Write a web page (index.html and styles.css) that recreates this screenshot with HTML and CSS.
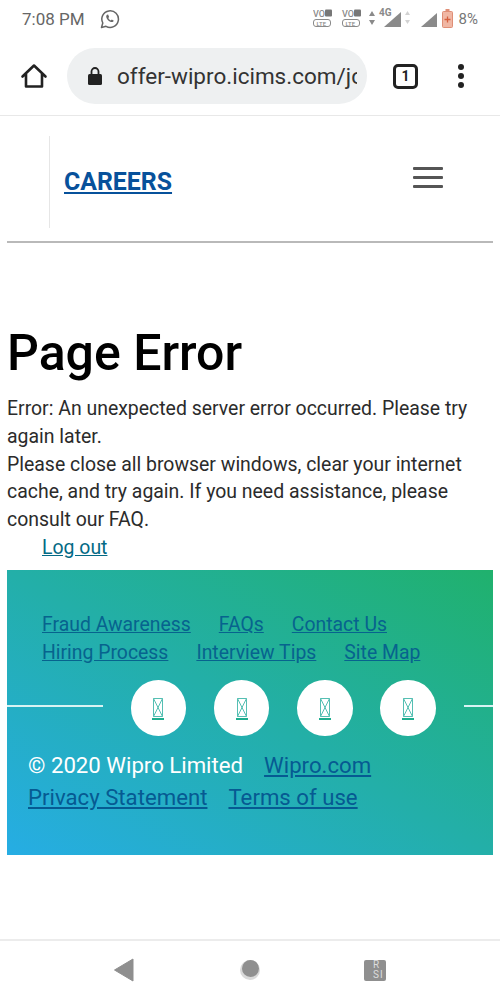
FILE: index.html
```html
<!DOCTYPE html>
<html lang="en">
<head>
<meta charset="utf-8">
<title>Page Error</title>
<link rel="stylesheet" href="styles.css">
</head>
<body>
<div class="status">
  <div class="status-left">
    <span class="clock">7:08 PM</span>
    <svg class="wa" width="20" height="20" viewBox="0 0 20 20"><path d="M1.500 18.500l1.300-4.500A8.300 8.300 0 1 1 6 17.300z" fill="none" stroke="#666" stroke-width="1.500" stroke-linejoin="round"/><path d="M7 5.800c-1 .8-1 2.200-.2 3.600 1 1.800 2.500 3 4.200 3.600 1.300.4 2.400-.2 2.800-1.300l-2-1.200-1 .9c-1-.5-2-1.500-2.500-2.500l.8-1-1-2.300z" fill="#666"/></svg>
  </div>
  <div class="status-right">
    <svg width="140" height="24" viewBox="0 0 140 24">
      <g fill="#8a8a8a" font-family="Roboto, sans-serif" font-weight="500">
        <text x="0" y="10" font-size="9">VO</text>
        <rect x="12" y="2.500" width="7" height="7" rx="1" fill="#777"/>
        <rect x="0.500" y="12.500" width="17" height="7" rx="2.500" fill="none" stroke="#8a8a8a"/>
        <text x="3.500" y="18.500" font-size="6">LTE</text>
        <text x="29" y="10" font-size="9">VO</text>
        <rect x="41" y="2.500" width="7" height="7" rx="1" fill="#777"/>
        <rect x="29.500" y="12.500" width="17" height="7" rx="2.500" fill="none" stroke="#8a8a8a"/>
        <text x="32.500" y="18.500" font-size="6">LTE</text>
        <path d="M56 9l3-5 3 5zM56 13l3 5 3-5z"/>
        <text x="66" y="9" font-size="10" font-weight="700">4G</text>
        <path d="M71 20L88 5v15z" fill="#8a8a8a"/>
        <path d="M92 8l2.500-4 2.500 4zM92 13l2.500 4 2.500-4z" fill="#d2d2d2"/>
        <path d="M108 20L124 6v14z"/>
      </g>
      <rect x="129.500" y="4.500" width="10" height="16" rx="1" fill="#f0b7a4" stroke="#df8e76"/>
      <rect x="132.500" y="2" width="4" height="2.500" fill="#df8e76"/>
      <path d="M134.500 9.500v6M131.500 12.500h6" stroke="#d5603f" stroke-width="1.300"/>
    </svg>
    <span class="battery">8%</span>
  </div>
</div>
<div class="toolbar">
  <svg class="home" width="28" height="28" viewBox="0 0 28 28"><path d="M2.500 14.500L14 3.500l11.500 11M6 12v12.500h16V12" fill="none" stroke="#222" stroke-width="2.600" stroke-linejoin="round" stroke-linecap="round"/></svg>
  <div class="omnibox">
    <svg width="16" height="20" viewBox="0 0 16 20"><path d="M4.500 8V5.500a3.500 3.500 0 0 1 7 0V8" fill="none" stroke="#222" stroke-width="1.800"/><rect x="1" y="8" width="14" height="11" rx="1.500" fill="#222"/></svg>
    <span class="url">offer-wipro.icims.com/jc</span>
  </div>
  <div class="tabs">1</div>
  <div class="dots"><i></i><i></i><i></i></div>
</div>

<header class="site-header">
  <div class="brand"><a href="#" class="careers">CAREERS</a></div>
  <div class="burger"><i></i><i></i><i></i></div>
</header>

<main class="content">
  <h1>Page Error</h1>
  <p class="msg">Error: An unexpected server error occurred. Please try again later.<br>Please close all browser windows, clear your internet cache, and try again. If you need assistance, please consult our FAQ.</p>
  <a href="#" class="logout">Log out</a>
</main>

<footer class="footer">
  <div class="links">
    <div class="link-row"><a href="#">Fraud Awareness</a><a href="#">FAQs</a><a href="#">Contact Us</a></div>
    <div class="link-row"><a href="#">Hiring Process</a><a href="#">Interview Tips</a><a href="#">Site Map</a></div>
  </div>
  <div class="social">
    <span class="rule rule-left"></span>
    <div class="circles">
      <span class="circle"><svg width="12" height="23" viewBox="0 0 12 23"><path d="M1.500 .5h9v18h-9zM1.500 .5l9 18M10.500 .5l-9 18" fill="none" stroke="#55bfb3"/><rect x="0" y="20" width="12" height="2" fill="#1fae8f"/></svg></span>
      <span class="circle"><svg width="12" height="23" viewBox="0 0 12 23"><path d="M1.500 .5h9v18h-9zM1.500 .5l9 18M10.500 .5l-9 18" fill="none" stroke="#55bfb3"/><rect x="0" y="20" width="12" height="2" fill="#1fae8f"/></svg></span>
      <span class="circle"><svg width="12" height="23" viewBox="0 0 12 23"><path d="M1.500 .5h9v18h-9zM1.500 .5l9 18M10.500 .5l-9 18" fill="none" stroke="#55bfb3"/><rect x="0" y="20" width="12" height="2" fill="#1fae8f"/></svg></span>
      <span class="circle"><svg width="12" height="23" viewBox="0 0 12 23"><path d="M1.500 .5h9v18h-9zM1.500 .5l9 18M10.500 .5l-9 18" fill="none" stroke="#55bfb3"/><rect x="0" y="20" width="12" height="2" fill="#1fae8f"/></svg></span>
    </div>
    <span class="rule rule-right"></span>
  </div>
  <div class="legal">
    <div class="legal-row"><span class="copy">© 2020 Wipro Limited</span><a href="#">Wipro.com</a></div>
    <div class="legal-row"><a href="#">Privacy Statement</a><a href="#">Terms of use</a></div>
  </div>
</footer>

<div class="spacer"></div>

<nav class="navbar">
  <svg width="22" height="24" viewBox="0 0 22 24"><path d="M1.500 12L20 1v22z" fill="#8f8f8f" stroke="#8f8f8f" stroke-linejoin="round"/></svg>
  <svg width="20" height="20" viewBox="0 0 20 20"><circle cx="10" cy="10" r="10" fill="#d9d9d9"/><circle cx="10.500" cy="8.500" r="8.500" fill="#8f8f8f"/></svg>
  <div class="recent"><span>R<br>SI</span></div>
</nav>
</body>
</html>
```
FILE: styles.css
```css
* { box-sizing: border-box; }
html, body { margin: 0; padding: 0; }
body {
  width: 500px;
  height: 1000px;
  display: flex;
  flex-direction: column;
  background: #fff;
  font-family: Roboto, "Liberation Sans", sans-serif;
  color: #222;
  overflow: hidden;
}
.status {
  height: 37px;
  flex: none;
  display: flex;
  justify-content: space-between;
  padding: 7px 22px 0 22px;
}
.status-left { display: flex; align-items: flex-start; gap: 15px; }
.clock { font-size: 17px; line-height: 24px; color: #666; }
.wa { margin-top: 2px; }
.status-right { display: flex; align-items: flex-start; gap: 6px; }
.battery { font-size: 15px; line-height: 24px; color: #777; }
.toolbar {
  height: 79px;
  flex: none;
  display: flex;
  align-items: center;
  padding: 0 0 0 20px;
  border-bottom: 1px solid #e8e8e8;
}
.home { flex: none; }
.omnibox {
  width: 300px;
  height: 56px;
  margin-left: 19px;
  border-radius: 28px;
  background: #eef0f1;
  display: flex;
  align-items: center;
  padding-left: 20px;
  gap: 14px;
  flex: none;
}
.url { font-size: 22.500px; color: #333; white-space: nowrap; width: 240px; overflow: hidden; }
.tabs {
  width: 25px;
  height: 25px;
  margin-left: 26px;
  border: 3px solid #222;
  border-radius: 5px;
  font-size: 14px;
  font-weight: 700;
  display: flex;
  align-items: center;
  justify-content: center;
  flex: none;
}
.dots { margin-left: 40px; display: flex; flex-direction: column; gap: 3px; flex: none; }
.dots i { display: block; width: 6px; height: 6px; border-radius: 50%; background: #222; }

.site-header {
  flex: none;
  height: 127px;
  margin: 0 7px;
  padding: 20px 0 13px 42px;
  border-bottom: 2px solid #b9b9b9;
  display: flex;
  justify-content: space-between;
  align-items: flex-start;
}
.brand {
  height: 92px;
  border-left: 1px solid #e6e6e6;
  padding: 0 0 2px 14px;
  display: flex;
  align-items: center;
}
.careers { font-size: 24.850px; font-weight: 700; color: #07519b; }
.burger { margin: 31px 50px 0 0; display: flex; flex-direction: column; gap: 6px; }
.burger i { display: block; width: 30px; height: 3px; border-radius: 1px; background: #555; }

.content { flex: none; padding: 80px 7px 0; }
h1 { margin: 0; font-size: 50px; font-weight: 500; line-height: 60px; color: #000; }
.msg { margin: 12px 0 0; font-size: 19.450px; line-height: 27.800px; color: #2b2b2b; }
.logout { display: inline-block; margin: 0 0 0 35px; font-size: 19.450px; line-height: 27.800px; color: #036a85; }

.footer {
  flex: none;
  height: 285px;
  margin: 8px 7px 0;
  background: linear-gradient(to top right, #26ade4, #20b16d);
  color: #fff;
  padding-top: 41px;
}
.links { padding-left: 35px; }
.link-row { display: flex; gap: 28px; font-size: 19.400px; line-height: 27.800px; }
.link-row a { color: #07638e; }
.legal a { color: #065a92; }
.social { display: flex; align-items: flex-start; margin-top: 14px; }
.rule { height: 2px; background: #d8f3f3; margin-top: 25px; flex: none; }
.rule-left { width: 96px; }
.rule-right { width: 29px; margin-left: 28px; }
.circles { display: flex; gap: 27.800px; margin-left: 27.500px; }
.circle {
  width: 55.500px;
  height: 55.500px;
  border-radius: 50%;
  background: #fff;
  display: flex;
  align-items: center;
  justify-content: center;
  padding-top: 2px;
}
.legal { margin-top: 13px; padding-left: 21px; }
.legal-row { display: flex; gap: 21px; font-size: 22.200px; line-height: 32px; }
.copy { color: #fff; }

.spacer { flex: 1; }
.navbar {
  flex: none;
  height: 61px;
  border-top: 2px solid #ececec;
  display: flex;
  align-items: flex-start;
  padding: 17px 0 0 113px;
  gap: 105px;
}
.navbar svg:nth-child(2) { margin-top: 2px; }
.recent {
  width: 22px;
  height: 21px;
  margin-top: 2px;
  margin-left: -1px;
  background: #8f8f8f;
  border-radius: 2px;
  color: #ddd;
  font-size: 10px;
  line-height: 10px;
  letter-spacing: 1px;
  padding: 0 0 0 9px;
  white-space: nowrap;
}
```
